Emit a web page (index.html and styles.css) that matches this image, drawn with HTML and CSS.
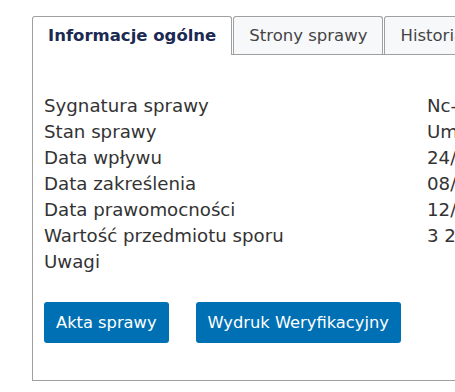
FILE: index.html
```html
<!DOCTYPE html>
<html lang="pl">
<head>
    <meta charset="UTF-8">
    <meta name="viewport" content="width=device-width, initial-scale=1.0">
    <title>Informacje ogólne</title>
    <link rel="stylesheet" href="styles.css">
</head>
<body>
    <div class="page">
        <div class="tabs">
            <ul class="tab-list">
                <li class="tab active">Informacje ogólne</li>
                <li class="tab">Strony sprawy</li>
                <li class="tab">Historia sprawy</li>
            </ul>
            <div class="tab-panel">
                <dl class="details">
                    <dt>Sygnatura sprawy</dt><dd>Nc-e 1234567/21</dd>
                    <dt>Stan sprawy</dt><dd>Umorzone</dd>
                    <dt>Data wpływu</dt><dd>24/05/2021</dd>
                    <dt>Data zakreślenia</dt><dd>08/09/2021</dd>
                    <dt>Data prawomocności</dt><dd>12/10/2021</dd>
                    <dt>Wartość przedmiotu sporu</dt><dd>3 245,00 zł</dd>
                    <dt>Uwagi</dt><dd></dd>
                </dl>
                <div class="actions">
                    <button type="button" class="btn">Akta sprawy</button>
                    <button type="button" class="btn">Wydruk Weryfikacyjny</button>
                </div>
            </div>
        </div>
    </div>
</body>
</html>
```

FILE: styles.css
```css
html, body {
    margin: 0;
    padding: 0;
    overflow: hidden;
}
body {
    font-family: "DejaVu Sans", Verdana, sans-serif;
    font-size: 16.5px;
    color: #333;
    background-color: #fff;
}
.page {
    padding: 16px 0 0 32px;
    width: 700px;
}
.tab-list {
    display: flex;
    list-style: none;
    margin: 0;
    padding: 0;
}
.tab {
    height: 37px;
    line-height: 37px;
    padding: 0 15px;
    border: 1px solid #a0a0a0;
    border-bottom: none;
    border-radius: 3px 3px 0 0;
    background-color: #f7f8fa;
    color: #444;
    margin-right: 1px;
}
.tab.active {
    background-color: #fff;
    color: #1b2a52;
    font-weight: bold;
    height: 38px;
    margin-bottom: -1px;
    position: relative;
    z-index: 1;
}
.tab-panel {
    border: 1px solid #a0a0a0;
    padding: 38px 0 37px 11px;
}
.details {
    display: grid;
    grid-template-columns: 383px auto;
    font-size: 18.2px;
    line-height: 26px;
    margin: 0;
}
.details dt,
.details dd {
    margin: 0;
    white-space: nowrap;
}
.actions {
    display: flex;
    gap: 27px;
    margin-top: 27px;
}
.btn {
    font-family: inherit;
    font-size: 16.3px;
    height: 41px;
    padding: 0 12px;
    background-color: #0070b5;
    color: #fff;
    border: none;
    border-radius: 3px;
    cursor: pointer;
}
```
